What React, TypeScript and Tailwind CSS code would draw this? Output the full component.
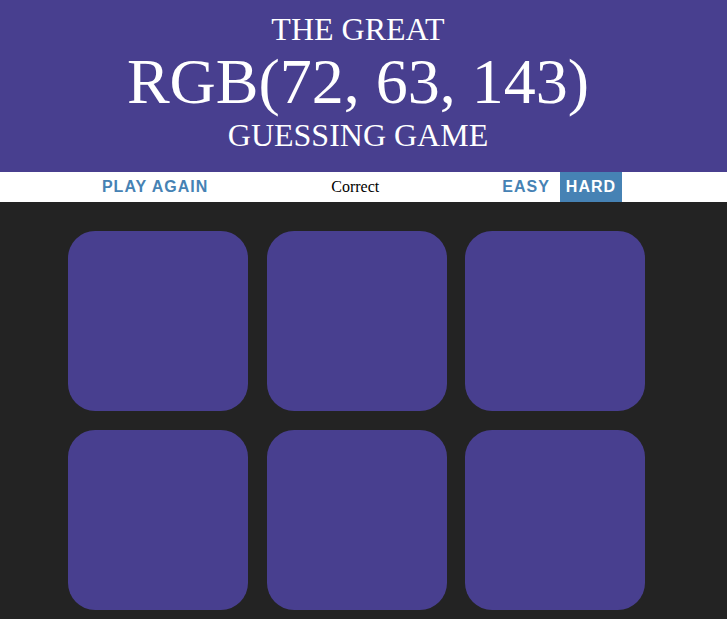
import React from "react";

export default function App() {
  const squares = [0, 1, 2, 3, 4, 5];
  return (
    <div className="min-h-[619px] bg-[#232323] font-['Liberation_Serif',serif]">
      <h1 className="bg-[#483f8f] text-white text-center font-normal uppercase leading-[1.1] pt-[12px] pb-[19px] pr-[11px] m-0">
        <div className="text-[32px]">The Great</div>
        <div className="text-[64px]">RGB(72, 63, 143)</div>
        <div className="text-[32px]">Guessing Game</div>
      </h1>
      <div className="bg-white h-[30px] flex items-stretch justify-center pr-[9px] text-black text-[16px]">
        <button className="px-[6px] h-full bg-transparent uppercase font-bold tracking-[1px] text-[#4682b4] font-['Liberation_Sans',sans-serif]">
          Play Again
        </button>
        <span className="w-[274px] ml-[4px] flex items-center justify-center">Correct</span>
        <button className="ml-[4px] px-[6px] h-full bg-transparent uppercase font-bold tracking-[1px] text-[#4682b4] font-['Liberation_Sans',sans-serif]">
          Easy
        </button>
        <button className="ml-[4px] px-[6px] h-full bg-[#4682b4] uppercase font-bold tracking-[1px] text-white font-['Liberation_Sans',sans-serif]">
          Hard
        </button>
      </div>
      <div className="pl-[68px] pt-[29px] pb-[10px] grid grid-cols-[180px_180px_180px] gap-x-[18.5px] gap-y-[19px]">
        {squares.map((i) => (
          <div key={i} className="w-[180px] h-[180px] rounded-[27px] bg-[#483f8f]" />
        ))}
      </div>
    </div>
  );
}
